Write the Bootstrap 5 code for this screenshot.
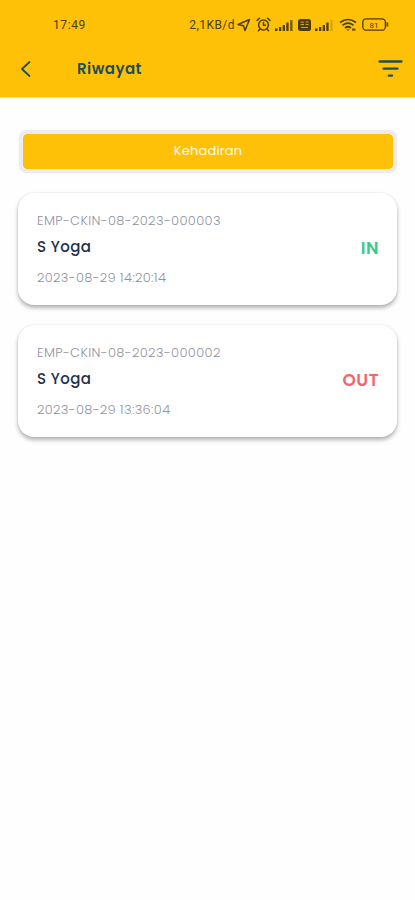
<!DOCTYPE html>
<html lang="id">
<head>
<meta charset="utf-8">
<meta name="viewport" content="width=device-width, initial-scale=1">
<title>Riwayat</title>
<link href="https://cdn.jsdelivr.net/npm/bootstrap@5.3.0/dist/css/bootstrap.min.css" rel="stylesheet">
<style>
body{font-family:Poppins,Inter,sans-serif;background:#fefefe;min-height:900px}
svg{display:block;flex:none}
.app-header{background:#ffc107;height:97px;box-shadow:0 1px 1px rgba(255,193,7,.35)}
.status-bar{height:49px;padding:0 26px 0 53px;font:12px/49px Roboto,sans-serif;color:#4d3d0b}
.clock{letter-spacing:.6px;padding-top:1px}
.speed{letter-spacing:.45px;padding-top:1px;margin-right:-2px}
.signal-first,.signal-second{margin-left:3px}
.gap-status{margin-left:5px}
.title-bar{height:39px;padding:0 12px 0 20px;color:#1f4e5b}
.page-title{font-size:15px;font-weight:600;letter-spacing:.45px;line-height:39px;margin-left:45px}
.page-body{padding:33px 18px 0}
.btn-type{border:4px solid #ececee;border-radius:8px;background:#ffc107;background-clip:padding-box;color:#fffbea;height:43px;font-size:13px;line-height:33px;padding:0 0 2px;letter-spacing:.2px;margin-left:1px;width:378px;box-shadow:0 0 2px #eee}
.log-card{border:0;border-radius:16px;background:#fff;height:112px;margin-top:20px;padding:0 19px;box-shadow:0 3px 4px rgba(0,0,0,.29),0 0 2px rgba(0,0,0,.12)}
.log-code,.log-time{font-size:13px;font-weight:300;color:#90939f;line-height:20px;white-space:nowrap;letter-spacing:.33px}
.log-code{letter-spacing:.37px}
.log-name{font-size:15px;font-weight:500;color:#1f304c;line-height:24px;letter-spacing:.4px;margin:4px 0 9px}
.log-state{font-size:17px;font-weight:600;line-height:24px;letter-spacing:.5px;margin-right:-1px;padding-bottom:2px}
.state-in{color:#36c98a}
.state-out{color:#f5656e}
</style>
<script src="https://cdn.jsdelivr.net/npm/bootstrap@5.3.0/dist/js/bootstrap.bundle.min.js"></script>
</head>
<body>
<header class="app-header">
  <div class="status-bar d-flex align-items-center justify-content-between">
    <span class="clock">17:49</span>
    <div class="d-flex align-items-center">
      <span class="speed">2,1KB/d</span>
      <svg class="ms-1" width="14" height="14" viewBox="0 0 14 14" fill="none" stroke="currentColor" stroke-width="1.5" stroke-linejoin="round"><path d="M1 6.5 12.5 1.5 8 12.5 6.5 7.8Z"/></svg>
      <svg class="gap-status" width="15" height="15" viewBox="0 0 15 15" fill="none" stroke="currentColor" stroke-width="1.5" stroke-linecap="round"><circle cx="7.5" cy="8" r="4.9"/><path d="M7.5 5.5V8.3H9.5M1 3.5 3.5 1.3M14 3.5 11.5 1.3M3.7 12.3 2.5 13.7M11.3 12.3 12.5 13.7"/></svg>
      <svg class="signal-first" width="20" height="12" viewBox="0 0 20 12" fill="currentColor"><path d="M1 9.5h2.5V12H1zM5 8h2.3v4H5zM8.7 6H11v6H8.7zM12.3 3.5h2.3V12h-2.3z"/><path d="M16.2 1h2.3v11h-2.3z" opacity=".8"/></svg>
      <svg class="ms-1" width="13" height="12" viewBox="0 0 13 12"><rect width="13" height="12" rx="2.5" fill="currentColor"/><path d="M2.5 3.2H6M2.5 5.5H6M7.5 3h3M7.5 5.5h3M3 8.5h7" stroke="#d9a40b" stroke-width="1"/></svg>
      <svg class="signal-second" width="20" height="12" viewBox="0 0 20 12" fill="currentColor"><path d="M1 9.5h2.5V12H1zM5 8h2.3v4H5zM8.7 6H11v6H8.7zM12.3 3.5h2.3V12h-2.3z"/><path d="M16.5 1h2v11h-2z" opacity=".25"/></svg>
      <svg class="gap-status" width="18" height="14" viewBox="0 0 18 14" fill="none" stroke="currentColor" stroke-width="1.7"><path d="M1 4.5Q9-1.5 17 4.5M3.5 7.3Q9 3 14.5 7.3M6 10Q9 7.5 12 10"/><path d="M7.3 11.2h3.4L9 13zM13 10.5h3.5v2.3H13z" fill="currentColor" stroke="none" opacity=".8"/></svg>
      <svg class="gap-status" width="27" height="13" viewBox="0 0 27 13"><rect x=".8" y=".8" width="22.6" height="11.4" rx="3.5" fill="none" stroke="currentColor" stroke-width="1.3"/><path d="M24.5 4.5h1.7v4h-1.7z" fill="currentColor"/><text x="12" y="9.5" text-anchor="middle" font-family="Roboto, sans-serif" font-size="8" fill="currentColor">81</text></svg>
    </div>
  </div>
  <div class="title-bar d-flex align-items-center">
    <svg width="12" height="18" viewBox="0 0 12 18" fill="none" stroke="currentColor" stroke-width="1.8" stroke-linecap="round" stroke-linejoin="round"><path d="M9.5 2 2 9l7.5 7"/></svg>
    <h1 class="page-title mb-0">Riwayat</h1>
    <svg class="ms-auto" width="25" height="18" viewBox="0 0 25 18" stroke="currentColor" stroke-width="2.3" stroke-linecap="round"><path d="M1.5 1.5h22M5.5 8.7h14M10.8 15.7h3.2"/></svg>
  </div>
</header>
<main class="page-body d-flex flex-column">
  <button type="button" class="btn btn-type">Kehadiran</button>
  <section class="log-card card flex-row align-items-center justify-content-between">
    <div>
      <div class="log-code">EMP-CKIN-08-2023-000003</div>
      <div class="log-name">S Yoga</div>
      <div class="log-time">2023-08-29 14:20:14</div>
    </div>
    <div class="log-state state-in">IN</div>
  </section>
  <section class="log-card card flex-row align-items-center justify-content-between">
    <div>
      <div class="log-code">EMP-CKIN-08-2023-000002</div>
      <div class="log-name">S Yoga</div>
      <div class="log-time">2023-08-29 13:36:04</div>
    </div>
    <div class="log-state state-out">OUT</div>
  </section>
</main>
</body>
</html>
